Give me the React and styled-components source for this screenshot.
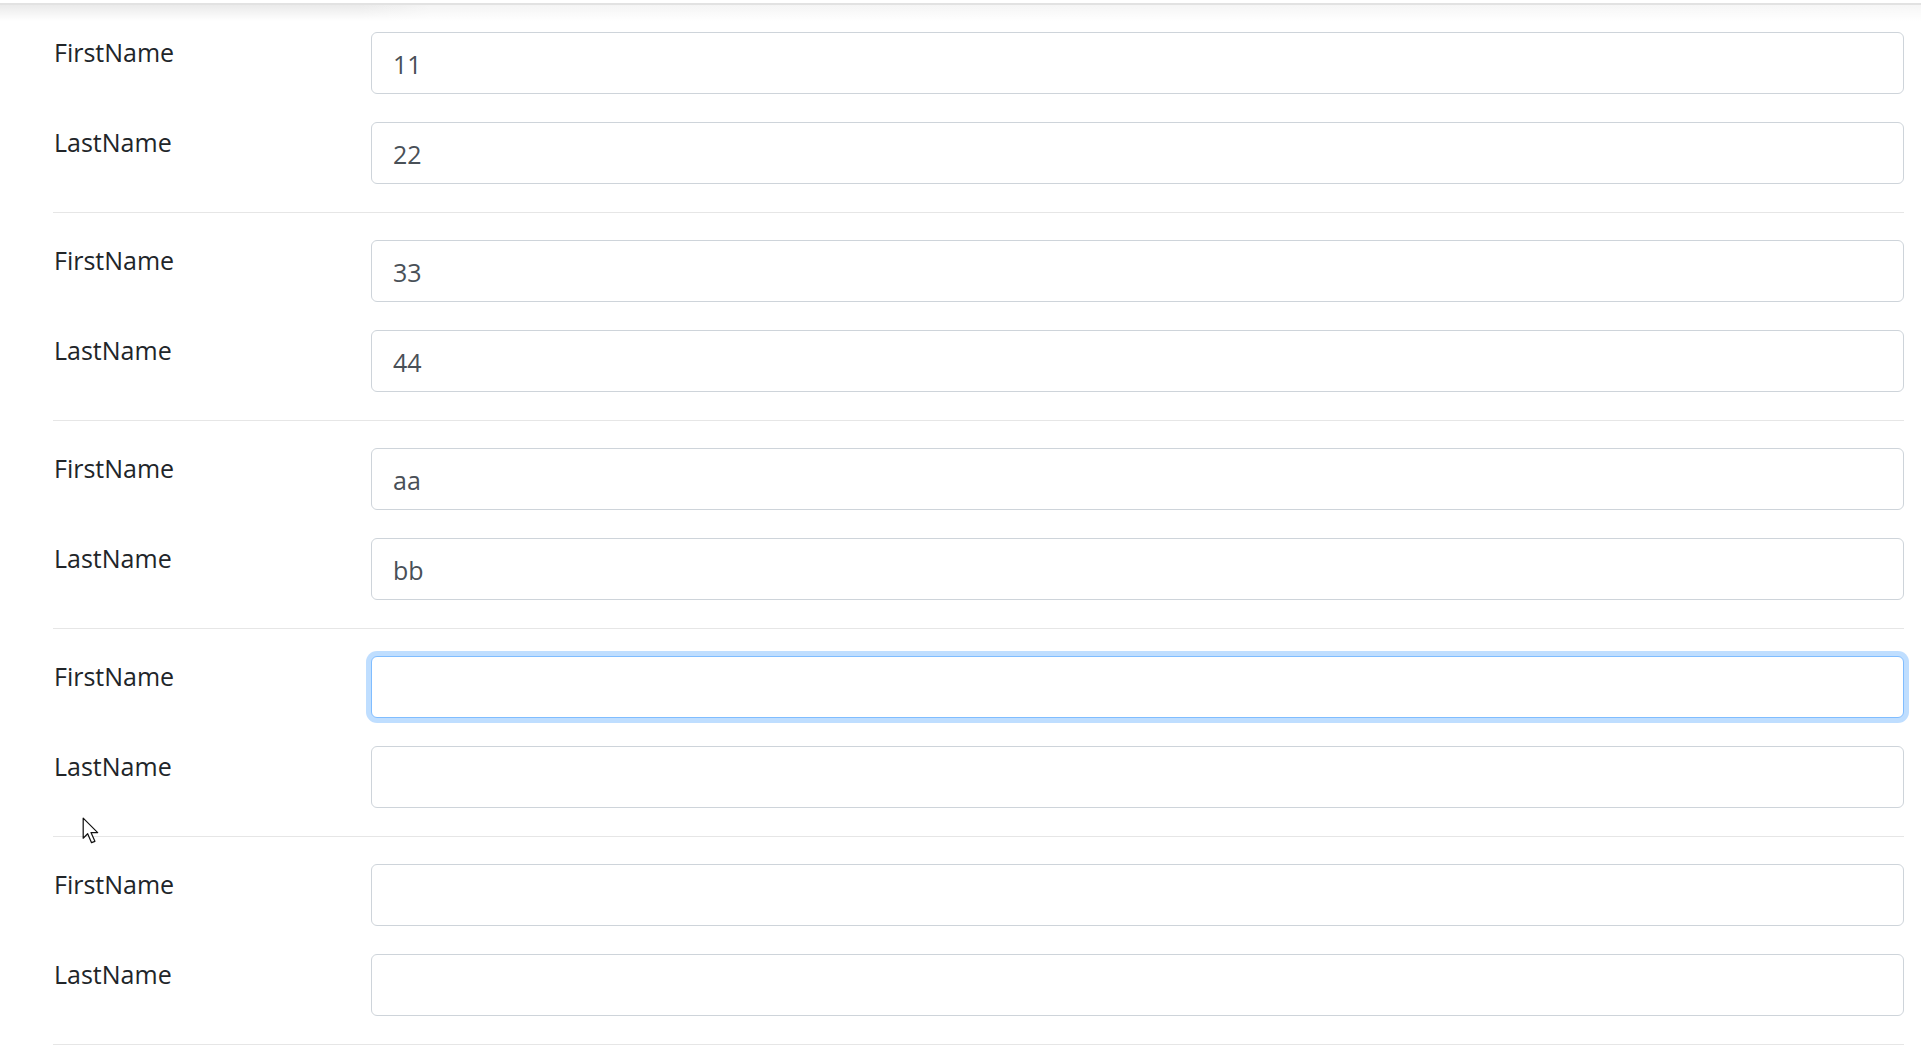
import React from "react";
import styled, { createGlobalStyle } from "styled-components";

const GlobalStyle = createGlobalStyle`
  html, body {
    margin: 0;
    padding: 0;
    background: #fff;
  }
  body {
    font-family: "Open Sans", "Noto Sans", sans-serif;
  }
`;

const Page = styled.div`
  position: relative;
  min-height: 1056px;
  background: #fff;
  overflow: hidden;
`;

const TopStrip = styled.div`
  margin-top: 3px;
  height: 16px;
  border-top: 2px solid #e2e2e2;
  background: linear-gradient(to bottom, rgba(255, 255, 255, 0) 0, #fff 100%),
    linear-gradient(to right, #eaeaea 0, #eaeaea 360px, #f4f4f4 430px, #f6f6f6 100%);
`;

const Form = styled.form`
  padding: 11px 17px 0 53px;
`;

const Group = styled.div`
  display: flex;
  flex-direction: column;
  gap: 28px;
`;

const Field = styled.div`
  display: grid;
  grid-template-columns: 318px 1fr;
  align-items: start;
`;

const Label = styled.label`
  padding-top: 2px;
  padding-left: 1px;
  font-size: 25px;
  line-height: 1.5;
  color: #212529;
`;

const Input = styled.input`
  box-sizing: border-box;
  width: 100%;
  height: 62px;
  margin: 0;
  padding: 2px 21px 0;
  font-family: inherit;
  font-size: 25px;
  color: #495057;
  background: #fff;
  border: 1px solid ${(p) => (p.$focused ? "#80bdff" : "#ced4da")};
  border-radius: 6px;
  box-shadow: ${(p) => (p.$focused ? "0 0 0 5px rgba(0, 123, 255, 0.25)" : "none")};
  outline: none;
`;

const Divider = styled.hr`
  margin: 28px 0 27px;
  border: 0;
  height: 1px;
  background: #e6e6e6;
`;

const Pointer = styled.svg`
  position: absolute;
  left: 82px;
  top: 817px;
  pointer-events: none;
`;

const people = [
  { first: "11", last: "22" },
  { first: "33", last: "44" },
  { first: "aa", last: "bb" },
  { first: "", last: "", focused: true },
  { first: "", last: "" },
];

export default function App() {
  return (
    <Page>
      <GlobalStyle />
      <TopStrip />
      <Form onSubmit={(e) => e.preventDefault()}>
        {people.map((p, i) => (
          <div key={i}>
            <Group>
              <Field>
                <Label>FirstName</Label>
                <Input defaultValue={p.first} $focused={p.focused} />
              </Field>
              <Field>
                <Label>LastName</Label>
                <Input defaultValue={p.last} />
              </Field>
            </Group>
            <Divider />
          </div>
        ))}
      </Form>
      <Pointer width="18" height="29" viewBox="0 0 16 26">
        <path
          d="M1 1 L1 19 L5 15 L8.5 23 L11.5 21.8 L8 14 L14 14 Z"
          fill="#fff"
          stroke="#111"
          strokeWidth="1.1"
          strokeLinejoin="round"
        />
      </Pointer>
    </Page>
  );
}
